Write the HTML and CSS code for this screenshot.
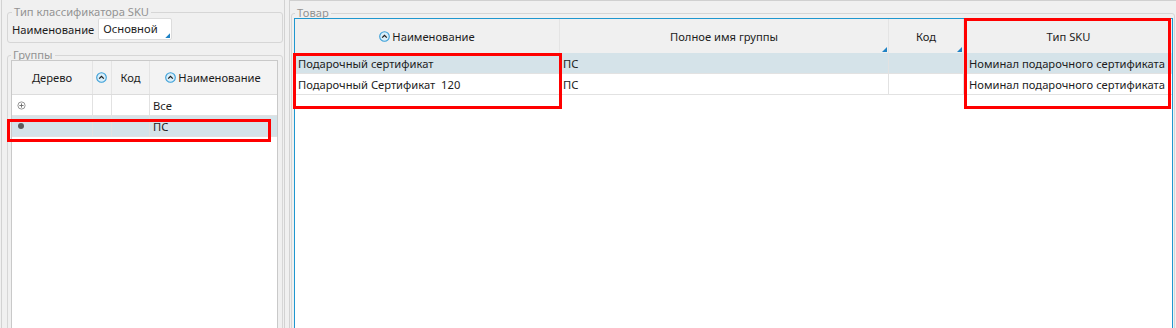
FILE: index.html
```html
<!DOCTYPE html>
<html lang="ru">
<head>
<meta charset="utf-8">
<title>SKU</title>
<link rel="stylesheet" href="styles.css">
</head>
<body>
<div class="app">
  <div class="left">
    <fieldset class="group g-type">
      <legend>Тип классификатора SKU</legend>
      <div class="field">
        <span class="label">Наименование</span>
        <span class="combo">Основной<i class="corner"></i></span>
      </div>
    </fieldset>
    <fieldset class="group g-groups">
      <legend>Группы</legend>
      <div class="grid tree">
        <div class="row head">
          <div class="cell c">Дерево</div>
          <div class="cell c"><svg class="sort" viewBox="0 0 11 11"><circle cx="5.5" cy="5.5" r="4.8"/><path d="M3.2 6.6 5.5 4.3 7.8 6.6"/></svg></div>
          <div class="cell c">Код</div>
          <div class="cell c"><svg class="sort" viewBox="0 0 11 11"><circle cx="5.5" cy="5.5" r="4.8"/><path d="M3.2 6.6 5.5 4.3 7.8 6.6"/></svg>Наименование</div>
        </div>
        <div class="row">
          <div class="cell"><svg class="node" viewBox="0 0 9 9"><circle cx="4.5" cy="4.5" r="3.6"/><path d="M2.4 4.5h4.2M4.5 2.4v4.2"/></svg></div>
          <div class="cell"></div>
          <div class="cell"></div>
          <div class="cell">Все</div>
        </div>
        <div class="row sel">
          <div class="cell"><span class="leaf"></span></div>
          <div class="cell"></div>
          <div class="cell"></div>
          <div class="cell">ПС</div>
        </div>
      </div>
    </fieldset>
  </div>
  <div class="splitter"></div>
  <div class="right">
    <fieldset class="group g-goods">
      <legend>Товар</legend>
      <div class="grid goods">
        <div class="row head">
          <div class="cell c"><svg class="sort" viewBox="0 0 11 11"><circle cx="5.5" cy="5.5" r="4.8"/><path d="M3.2 6.6 5.5 4.3 7.8 6.6"/></svg>Наименование</div>
          <div class="cell c">Полное имя группы<i class="corner"></i></div>
          <div class="cell c">Код<i class="corner"></i></div>
          <div class="cell c">Тип SKU</div>
        </div>
        <div class="row sel">
          <div class="cell">Подарочный сертификат</div>
          <div class="cell">ПС</div>
          <div class="cell"></div>
          <div class="cell r">Номинал подарочного сертификата</div>
        </div>
        <div class="row">
          <div class="cell">Подарочный Сертификат&nbsp; 120</div>
          <div class="cell">ПС</div>
          <div class="cell"></div>
          <div class="cell r">Номинал подарочного сертификата</div>
        </div>
      </div>
    </fieldset>
  </div>
  <div class="mark mark-tree"></div>
  <div class="mark mark-name"></div>
  <div class="mark mark-type"></div>
</div>
</body>
</html>
```
FILE: styles.css
```css
html, body {
  margin: 0;
  padding: 0;
  background: #f0f0f0;
  overflow: hidden;
}
body {
  font-family: "Noto Sans", "Open Sans", sans-serif;
  font-size: 11px;
  color: #1c1c1c;
}
.app {
  position: relative;
  display: flex;
  height: 344px;
  overflow: hidden;
}
.left {
  flex: 0 0 284px;
  box-sizing: border-box;
  margin-left: 1px;
  border-left: 1px solid #d2d2d2;
  border-right: 1px solid #d2d2d2;
  padding: 6px 1px 0 5px;
  display: flex;
  flex-direction: column;
}
.splitter {
  flex: 0 0 4px;
  border-right: 1px solid #d2d2d2;
}
.right {
  flex: 1;
  min-width: 0;
  border-top: 1px solid #d0d0d0;
  padding: 6px 1px 0 1px;
  display: flex;
  flex-direction: column;
}
.group {
  margin: 0;
  border: 1px solid #d6d6d6;
  border-radius: 3px;
  padding: 0;
  min-width: 0;
}
.group legend {
  margin-left: 0;
  padding: 0 2px;
  line-height: 12px;
  font-size: 11.2px;
  color: #939393;
}
.g-goods legend {
  margin-left: 1px;
}
.g-type {
  padding: 0 4px 2px 4px;
}
.field {
  display: flex;
  align-items: center;
  gap: 4px;
  height: 22px;
  font-size: 11.2px;
}
.combo {
  position: relative;
  box-sizing: border-box;
  width: 74px;
  height: 22px;
  line-height: 20px;
  background: #fff;
  border: 1px solid #dcdcdc;
  border-radius: 2px;
  padding-left: 4px;
}
.corner {
  position: absolute;
  right: 1px;
  bottom: 1px;
  width: 5px;
  height: 5px;
  background: #1f82c4;
  clip-path: polygon(100% 0, 100% 100%, 0 100%);
}
.g-groups {
  flex: 1;
  margin-top: 6px;
  padding: 0 4px 0 3px;
  display: flex;
  flex-direction: column;
}
.g-goods {
  flex: 1;
  padding: 0 1px 0 2px;
  display: flex;
  flex-direction: column;
}
.grid {
  margin-top: -1px;
  flex: 1;
  background: #fff;
}
.tree {
  border: 1px solid #c9c9c9;
}
.goods {
  border: 1px solid #1f97cf;
}
.row {
  display: grid;
  height: 21px;
  box-sizing: border-box;
  border-bottom: 1px solid #e2e2e2;
}
.tree .row {
  grid-template-columns: 81px 19px 38px 126px;
}
.goods .row {
  grid-template-columns: 265px 329px 75px 209px;
}
.row.head {
  height: 34px;
  background: #f0f0f0;
}
.tree .row.head {
  background: #f3f3f3;
  border-bottom-color: #dcdcdc;
}
.goods .row.head {
  border-bottom: 0;
}
.row.sel {
  background: #d5e3e9;
}
.cell {
  position: relative;
  display: flex;
  align-items: center;
  white-space: nowrap;
  overflow: hidden;
  padding-left: 3px;
  border-right: 1px solid #e2e2e2;
  min-width: 0;
  font-size: 11.2px;
}
.head .cell {
  border-right-color: #e4e4e4;
}
.cell:last-child {
  border-right: 0;
}
.cell.c {
  justify-content: center;
  padding-left: 0;
}
.cell.r {
  justify-content: flex-end;
  padding-left: 0;
  padding-right: 8px;
}
.tree .row:not(.head) .cell:first-child {
  padding-left: 4px;
}
.sort {
  width: 11px;
  height: 11px;
  margin-right: 2px;
  flex: none;
}
.sort circle {
  fill: #d9eef9;
  stroke: #3a9fd8;
  stroke-width: 1.1;
}
.sort path {
  fill: none;
  stroke: #1d1d1d;
  stroke-width: 1.3;
}
.node {
  width: 9px;
  height: 9px;
  margin-left: 1px;
}
.node circle {
  fill: #fff;
  stroke: #8a8a8a;
  stroke-width: 0.9;
}
.node path {
  stroke: #6a6a6a;
  stroke-width: 0.9;
}
.leaf {
  width: 6px;
  height: 6px;
  margin-left: 2px;
  border-radius: 50%;
  background: #5c5c5c;
}
.mark {
  position: absolute;
  box-sizing: border-box;
  border: 3px solid #ff0000;
}
.mark-tree {
  left: 7px;
  top: 119px;
  width: 264px;
  height: 23px;
}
.mark-name {
  left: 293px;
  top: 53px;
  width: 269px;
  height: 56px;
}
.mark-type {
  left: 964px;
  top: 18px;
  width: 207px;
  height: 91px;
}
```
